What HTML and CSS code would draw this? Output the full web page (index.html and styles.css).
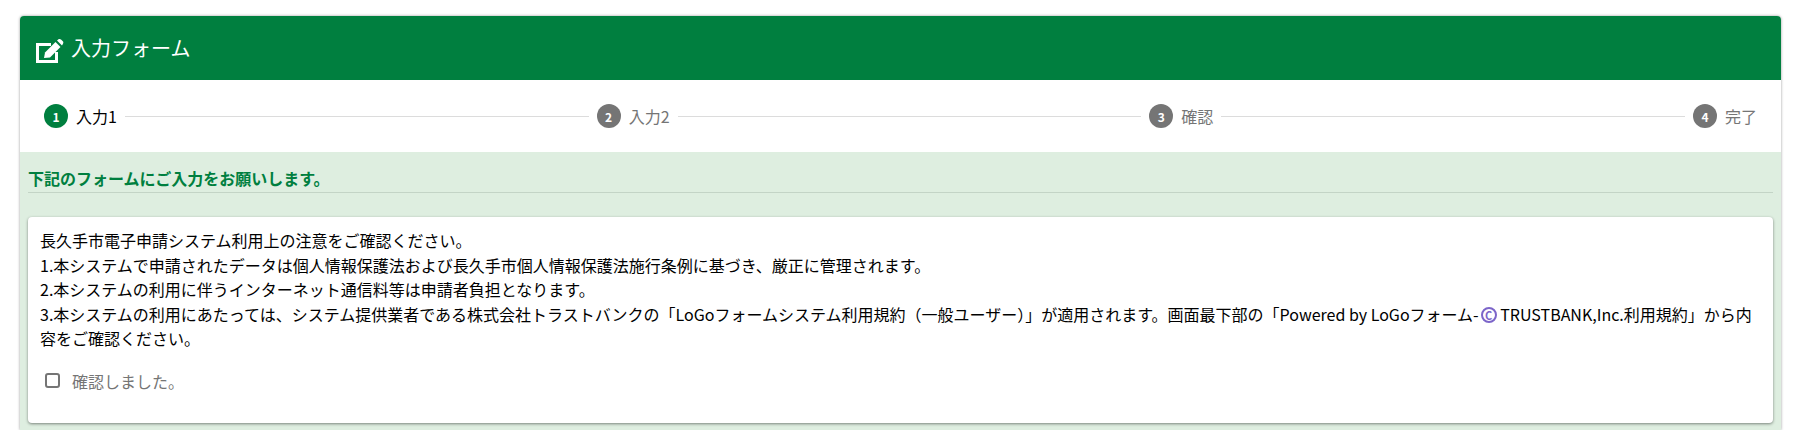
FILE: index.html
```html
<!DOCTYPE html>
<html lang="ja">
<head>
    <meta charset="UTF-8">
    <meta name="viewport" content="width=device-width, initial-scale=1.0">
    <title>入力フォーム</title>
    <link rel="stylesheet" href="styles.css">
</head>
<body>
    <div class="form-card">
        <div class="form-header">
            <svg class="header-icon" viewBox="0 0 28 24" width="28" height="24" aria-hidden="true">
                <path fill="none" stroke="#fff" stroke-width="3" d="M15 5.500H1.500V22.500H20.500V13"/>
                <path fill="#fff" d="M8 19 9 13.500 19.500 3 24.500 8 14 18.500Z"/>
                <path fill="#fff" d="M21 1.500 22.500 .2C23.300-.3 24.300-.2 25 .5L26.800 2.300C27.500 3 27.500 4 27 4.800L26 6.500Z"/>
            </svg>
            <span class="header-title">入力フォーム</span>
        </div>

        <div class="stepper">
            <div class="step active"><span class="step-num">1</span><span class="step-label">入力1</span></div>
            <div class="step-line"></div>
            <div class="step"><span class="step-num">2</span><span class="step-label">入力2</span></div>
            <div class="step-line"></div>
            <div class="step"><span class="step-num">3</span><span class="step-label">確認</span></div>
            <div class="step-line"></div>
            <div class="step"><span class="step-num">4</span><span class="step-label">完了</span></div>
        </div>

        <div class="form-body">
            <div class="section-title">下記のフォームにご入力をお願いします。</div>
            <div class="notice-card">
                <p class="notice-text">長久手市電子申請システム利用上の注意をご確認ください。<br>
                1.本システムで申請されたデータは個人情報保護法および長久手市個人情報保護法施行条例に基づき、厳正に管理されます。<br>
                2.本システムの利用に伴うインターネット通信料等は申請者負担となります。<br>
                3.本システムの利用にあたっては、システム提供業者である株式会社トラストバンクの「LoGoフォームシステム利用規約（一般ユーザー）」が適用されます。画面最下部の「Powered by LoGoフォーム-<span class="copyright">C</span> TRUSTBANK,Inc.利用規約」から内<br>
                容をご確認ください。</p>
                <label class="check-row">
                    <span class="check-box"></span>
                    <span>確認しました。</span>
                </label>
            </div>
        </div>
    </div>
</body>
</html>
```

FILE: styles.css
```css
:root {
    --green: #007f3f;
    --green-light: #deeee0;
    --grey: #757575;
}

html, body {
    height: 100%;
}

body {
    margin: 0;
    padding: 16px 17px 0 20px;
    box-sizing: border-box;
    overflow: hidden;
    background-color: #fff;
    font-family: "Noto Sans CJK JP", "Noto Sans", sans-serif;
    font-size: 16px;
    color: #000;
}

.form-card {
    height: 100%;
    display: flex;
    flex-direction: column;
    border-radius: 4px 4px 0 0;
    box-shadow: 0 0 3px rgba(0, 0, 0, 0.4);
    background-color: #fff;
}

.form-header {
    height: 64px;
    flex-shrink: 0;
    display: flex;
    align-items: center;
    gap: 7px;
    padding-left: 16px;
    border-radius: 4px 4px 0 0;
    background-color: var(--green);
    color: #fff;
    font-size: 20px;
}

.header-icon {
    margin-top: 5px;
    overflow: visible;
}

.header-title {
    padding-bottom: 2px;
}

.stepper {
    height: 72px;
    flex-shrink: 0;
    display: flex;
    align-items: center;
    padding: 0 24px;
}

.step {
    display: flex;
    align-items: center;
    gap: 8px;
    color: var(--grey);
}

.step.active {
    color: #000;
}

.step-num {
    width: 24px;
    height: 24px;
    display: flex;
    align-items: center;
    justify-content: center;
    border-radius: 50%;
    background-color: var(--grey);
    color: #fff;
    font-size: 12px;
    font-weight: 700;
}

.step.active .step-num {
    background-color: var(--green);
}

.step-label {
    font-size: 16px;
}

.step-line {
    flex: 1;
    height: 1px;
    margin: 0 8px;
    background-color: #dcdcdc;
}

.form-body {
    flex: 1;
    padding: 14px 8px 0;
    background-color: var(--green-light);
}

.section-title {
    height: 26px;
    line-height: 24px;
    border-bottom: 1px solid #c3d4c6;
    color: var(--green);
    font-weight: 700;
}

.notice-card {
    margin-top: 24px;
    height: 206px;
    padding: 11px 12px;
    box-sizing: border-box;
    border-radius: 4px;
    background-color: #fff;
    box-shadow: 0 1px 3px rgba(0, 0, 0, 0.45);
}

.notice-text {
    margin: 0;
    line-height: 24.5px;
}

.copyright {
    display: inline-flex;
    align-items: center;
    justify-content: center;
    width: 16px;
    height: 16px;
    box-sizing: border-box;
    margin-left: 2px;
    vertical-align: 1px;
    border: 2px solid #7c65c9;
    border-radius: 50%;
    color: #7c65c9;
    font-size: 11px;
    font-weight: 700;
    line-height: 1;
}

.check-row {
    display: flex;
    align-items: center;
    gap: 12px;
    margin-top: 18px;
    padding-left: 5px;
    color: var(--grey);
}

.check-box {
    width: 15px;
    height: 15px;
    box-sizing: border-box;
    border: 2px solid var(--grey);
    border-radius: 3px;
}
```
